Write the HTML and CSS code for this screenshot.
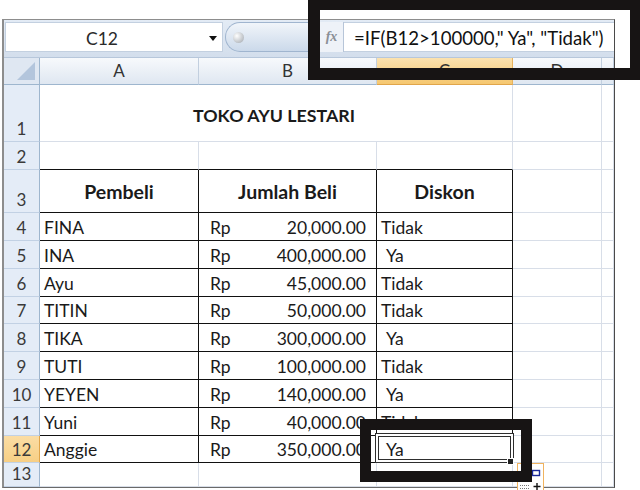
FILE: index.html
```html
<!DOCTYPE html>
<html>
<head>
<meta charset="utf-8">
<link rel="stylesheet" href="styles.css">
</head>
<body>
<div class="excel">
  <div class="toolbar">
    <div class="namebox"><span class="ref">C12</span><span class="caret"></span></div>
    <div class="pill"><span class="knob"></span></div>
    <div class="fx">fx</div>
    <div class="formula">=IF(B12&gt;100000," Ya", "Tidak")</div>
  </div>
  <div class="grid">
    <!-- header row -->
    <div class="corner"><span class="tri"></span></div>
    <div class="ch">A</div>
    <div class="ch">B</div>
    <div class="ch sel">C</div>
    <div class="ch">D</div>
    <div class="ch"></div>
    <!-- row 1 -->
    <div class="rh">1</div>
    <div class="c title span3">TOKO AYU LESTARI</div>
    <div class="c"></div>
    <div class="c"></div>
    <!-- row 2 -->
    <div class="rh">2</div>
    <div class="c tb"></div>
    <div class="c tb"></div>
    <div class="c tb"></div>
    <div class="c"></div>
    <div class="c"></div>
    <!-- row 3 -->
    <div class="rh">3</div>
    <div class="c t head">Pembeli</div>
    <div class="c t head">Jumlah Beli</div>
    <div class="c t head">Diskon</div>
    <div class="c"></div>
    <div class="c"></div>
    <!-- row 4 -->
    <div class="rh">4</div>
    <div class="c t txt">FINA</div>
    <div class="c t money"><span>Rp</span><span>20,000.00</span></div>
    <div class="c t txt">Tidak</div>
    <div class="c"></div>
    <div class="c"></div>
    <!-- row 5 -->
    <div class="rh">5</div>
    <div class="c t txt">INA</div>
    <div class="c t money"><span>Rp</span><span>400,000.00</span></div>
    <div class="c t txt ya">Ya</div>
    <div class="c"></div>
    <div class="c"></div>
    <!-- row 6 -->
    <div class="rh">6</div>
    <div class="c t txt">Ayu</div>
    <div class="c t money"><span>Rp</span><span>45,000.00</span></div>
    <div class="c t txt">Tidak</div>
    <div class="c"></div>
    <div class="c"></div>
    <!-- row 7 -->
    <div class="rh">7</div>
    <div class="c t txt">TITIN</div>
    <div class="c t money"><span>Rp</span><span>50,000.00</span></div>
    <div class="c t txt">Tidak</div>
    <div class="c"></div>
    <div class="c"></div>
    <!-- row 8 -->
    <div class="rh">8</div>
    <div class="c t txt">TIKA</div>
    <div class="c t money"><span>Rp</span><span>300,000.00</span></div>
    <div class="c t txt ya">Ya</div>
    <div class="c"></div>
    <div class="c"></div>
    <!-- row 9 -->
    <div class="rh">9</div>
    <div class="c t txt">TUTI</div>
    <div class="c t money"><span>Rp</span><span>100,000.00</span></div>
    <div class="c t txt">Tidak</div>
    <div class="c"></div>
    <div class="c"></div>
    <!-- row 10 -->
    <div class="rh">10</div>
    <div class="c t txt">YEYEN</div>
    <div class="c t money"><span>Rp</span><span>140,000.00</span></div>
    <div class="c t txt ya">Ya</div>
    <div class="c"></div>
    <div class="c"></div>
    <!-- row 11 -->
    <div class="rh">11</div>
    <div class="c t txt">Yuni</div>
    <div class="c t money"><span>Rp</span><span>40,000.00</span></div>
    <div class="c t txt">Tidak</div>
    <div class="c"></div>
    <div class="c"></div>
    <!-- row 12 -->
    <div class="rh sel">12</div>
    <div class="c t txt">Anggie</div>
    <div class="c t money"><span>Rp</span><span>350,000.00</span></div>
    <div class="c t txt ya active">Ya<span class="handle"></span></div>
    <div class="c"></div>
    <div class="c"></div>
    <!-- row 13 -->
    <div class="rh">13</div>
    <div class="c"></div>
    <div class="c"></div>
    <div class="c"></div>
    <div class="c"></div>
    <div class="c"></div>
  </div>
</div>

<div class="autofill">
  <svg width="26" height="27" viewBox="0 0 26 27">
    <rect x="14.5" y="6.5" width="7" height="5" fill="none" stroke="#1a2a9a" stroke-width="1.4"/>
    <path d="M2 21.5h9" stroke="#777" stroke-width="1" stroke-dasharray="1 1"/>
    <path d="M2 24.5h9" stroke="#777" stroke-width="1" stroke-dasharray="1 1"/>
    <path d="M19 19v7M15.5 22.5h7" stroke="#111" stroke-width="1.4"/>
  </svg>
</div>

<div class="mark mark-top"></div>
<div class="mark mark-bottom"></div>
</body>
</html>
```

FILE: styles.css
```css
* { box-sizing: border-box; margin: 0; padding: 0; }

html, body {
  width: 640px;
  height: 490px;
  overflow: hidden;
  background: #fff;
}

body {
  position: relative;
  font-family: Lato, "Liberation Sans", sans-serif;
  color: #1a1a1a;
}

.excel {
  margin: 19px 0 0 2px;
  width: 613px;
  border-top: 1px solid #8d8d8d;
  border-left: 2px solid #8d8d8d;
  border-right: 1px solid #4a4a4a;
  border-bottom: 1px solid #6a6a6a;
}

/* ---------- formula bar ---------- */
.toolbar {
  display: flex;
  height: 38px;
  padding: 2px 0 6px 1px;
  background: linear-gradient(#e3ebf5, #d3deec);
  border-bottom: 1px solid #b7c7db;
}

.namebox {
  display: flex;
  align-items: center;
  width: 218px;
  height: 30px;
  background: #fff;
  border: 1px solid #c3d0e0;
  font-size: 17.5px;
  color: #2a2a2a;
}

.namebox .ref {
  width: 192px;
  text-align: center;
  padding-top: 2px;
}

.caret {
  margin-left: 11px;
  margin-top: 3px;
  width: 0;
  height: 0;
  border-left: 4px solid transparent;
  border-right: 4px solid transparent;
  border-top: 5px solid #111;
}

.pill {
  display: flex;
  align-items: center;
  width: 95px;
  height: 30px;
  margin-left: 2px;
  border: 1px solid #a0b5cf;
  border-right: none;
  border-radius: 15px 0 0 15px;
  background: linear-gradient(#f1f5fa, #cbd9ea);
}

.knob {
  width: 11px;
  height: 11px;
  margin-left: 7px;
  border-radius: 50%;
  background: radial-gradient(circle at 35% 35%, #ffffff, #9ea4ab);
}

.fx {
  width: 24px;
  height: 30px;
  display: flex;
  align-items: center;
  justify-content: center;
  font-family: "Liberation Serif", serif;
  font-style: italic;
  font-weight: bold;
  font-size: 14px;
  color: #8a8f96;
  background: #eef2f8;
  border-right: 1px solid #b7c5d8;
}

.formula {
  flex: 1;
  height: 30px;
  display: flex;
  align-items: flex-end;
  padding: 0 0 3px 10px;
  background: #fff;
  border-top: 1px solid #c3d0e0;
  border-bottom: 1px solid #c3d0e0;
  font-size: 18.6px;
  line-height: 20px;
  color: #111;
  white-space: pre;
}

/* ---------- grid ---------- */
.grid {
  display: grid;
  grid-template-columns: 36px 159px 178px 136px 89px 12px;
  grid-template-rows: 27px 57px 28px 43px 28px 28px 28px 27px 28px 28px 28px 28px 27px 24px;
}

.corner {
  position: relative;
  background: #dfe7f2;
  border-right: 1px solid #9eb6ce;
  border-bottom: 1px solid #9eb6ce;
}

.tri {
  position: absolute;
  right: 4px;
  bottom: 4px;
  width: 0;
  height: 0;
  border-left: 18px solid transparent;
  border-bottom: 18px solid #b3c5dc;
}

.ch {
  display: flex;
  align-items: flex-end;
  justify-content: center;
  padding-bottom: 3px;
  background: linear-gradient(#f7f9fc, #dfe7f1);
  border-right: 1px solid #c2cfdf;
  border-bottom: 1px solid #9eb6ce;
  font-size: 17px;
  line-height: 20px;
  color: #333;
}

.ch.sel {
  background: linear-gradient(#fbe2b0, #f5c770);
  border-right-color: #e7b25d;
  border-bottom-color: #e0a54a;
}

.rh {
  display: flex;
  align-items: flex-end;
  justify-content: center;
  padding-bottom: 2px;
  background: #e4ecf7;
  border-right: 1px solid #9eb6ce;
  border-bottom: 1px solid #c2d1e4;
  font-size: 17px;
  line-height: 20px;
  color: #3a3a3a;
}

.rh.sel {
  background: linear-gradient(#fbdda4, #f7cf85);
  border-right-color: #e0a54a;
}

.c {
  position: relative;
  display: flex;
  align-items: flex-end;
  border-right: 1px solid #d8dee8;
  border-bottom: 1px solid #d8dee8;
  font-size: 17.5px;
  line-height: 20px;
  white-space: pre;
}

.span3 { grid-column: span 3; }

.title {
  align-items: center;
  justify-content: center;
  padding: 3px 4px 0 0;
  font-weight: bold;
  font-size: 17.8px;
}

.tb { border-bottom-color: #111; }

.t {
  border-right-color: #111;
  border-bottom-color: #111;
}

.head {
  align-items: center;
  justify-content: center;
  padding-top: 2px;
  font-weight: bold;
  font-size: 19.5px;
}

.txt { padding: 0 0 2px 4px; }

.ya { padding-left: 9px; }

.money {
  justify-content: space-between;
  padding: 0 10px 2px 11px;
}

.active { z-index: 2; }

.active::after {
  content: "";
  position: absolute;
  top: -3px;
  left: -2px;
  right: -2px;
  bottom: -1px;
  border: 1px solid #2e2e2e;
  box-shadow: inset 0 0 0 2px #fff, inset 0 0 0 3px #2e2e2e;
}

.handle {
  position: absolute;
  right: -2px;
  bottom: -3px;
  width: 7px;
  height: 7px;
  background: #222;
  border: 1px solid #fff;
  z-index: 3;
}

/* ---------- overlays ---------- */
.autofill {
  position: absolute;
  left: 517px;
  top: 463px;
  width: 27px;
  height: 28px;
  border: 1px solid #f0b35f;
  background: #fff;
}

.autofill svg { display: block; }

.mark {
  position: absolute;
  border-style: solid;
  border-color: #171414;
  z-index: 5;
}

.mark-top {
  left: 308px;
  top: 0;
  width: 332px;
  height: 80px;
  border-width: 10px 10px 12px 12px;
}

.mark-bottom {
  left: 360px;
  top: 419px;
  width: 172px;
  height: 63px;
  border-width: 11px;
}
```
